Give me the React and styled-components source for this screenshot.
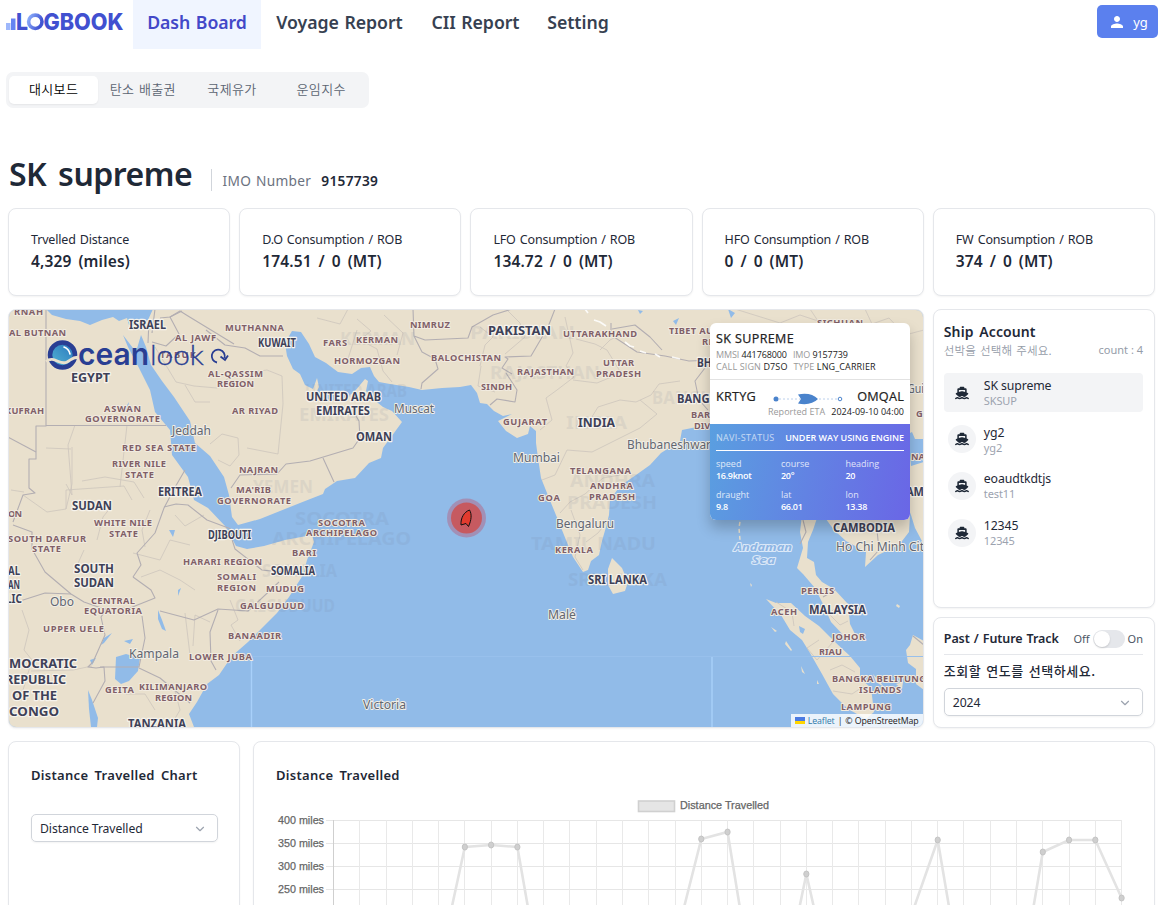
import React from "react";
import styled, { createGlobalStyle } from "styled-components";
import { FaShip } from "react-icons/fa6";
import { MdPerson } from "react-icons/md";
import { ChevronDown } from "lucide-react";

const Global = createGlobalStyle`
  * { box-sizing: border-box; }
  html, body { margin: 0; padding: 0; background: #fff; overflow: hidden; }
  body { font-family: "Noto Sans", "Noto Sans CJK KR", sans-serif; color: #1f2937; }
`;

const Page = styled.div`
  height: 905px;
  overflow: hidden;
  display: flex;
  flex-direction: column;
`;

const Nav = styled.header`
  display: flex;
  height: 49px;
  flex: none;
  padding-left: 6px;
`;
const LogoBox = styled.div`
  width: 127px;
  padding-top: 11px;
  svg { overflow: visible; }
`;
const NavItem = styled.a`
  height: 49px;
  width: ${(p) => p.$w}px;
  display: flex;
  justify-content: center;
  white-space: nowrap;
  line-height: 44px;
  font-size: 17.7px;
  font-weight: 600;
  letter-spacing: -0.05px;
  word-spacing: 1px;
  color: ${(p) => (p.$active ? "#4348c8" : "#374151")};
  background: ${(p) => (p.$active ? "#f0f5ff" : "transparent")};
`;
const UserButton = styled.button`
  margin: 5px 5px 0 auto;
  width: 61px;
  height: 33px;
  border: 0;
  border-radius: 5px;
  background: #5b80ee;
  color: #fff;
  display: flex;
  align-items: center;
  justify-content: center;
  gap: 7px;
  font: 13px "Noto Sans", sans-serif;
  padding: 0 0 0 1px;
`;

const Tabs = styled.nav`
  display: flex;
  flex: none;
  width: 363px;
  height: 36px;
  margin: 23px 0 0 6px;
  padding: 4px 3px;
  background: #f3f4f6;
  border-radius: 7px;
`;
const Tab = styled.div`
  width: 89.2px;
  height: 28px;
  line-height: 25.5px;
  text-align: center;
  font-family: "Noto Sans CJK KR", sans-serif;
  font-size: 13px;
  font-weight: 350;
  letter-spacing: 0.35px;
  word-spacing: 1.5px;
  border-radius: 5px;
  color: ${(p) => (p.$active ? "#000" : "#5b6472")};
  background: ${(p) => (p.$active ? "#fff" : "transparent")};
  box-shadow: ${(p) => (p.$active ? "0 1px 2px rgba(0,0,0,.06)" : "none")};
`;

const Heading = styled.div`
  display: flex;
  flex: none;
  height: 100px;
  padding: 43px 0 0 9px;
`;
const ShipTitle = styled.h1`
  margin: 0;
  width: 202px;
  font-size: 32px;
  line-height: 45px;
  font-weight: 600;
  letter-spacing: -0.5px;
  word-spacing: 4px;
  white-space: nowrap;
`;
const Imo = styled.div`
  display: flex;
  gap: 10px;
  height: 22px;
  margin-top: 18px;
  padding-left: 10.5px;
  border-left: 1px solid #d1d5db;
  line-height: 23px;
  font-size: 13.7px;
  letter-spacing: 0.3px;
  word-spacing: 1px;
  color: #6b7280;
  b { color: #1f2937; font-weight: 600; }
`;

const Dashboard = styled.main`
  display: grid;
  grid-template-columns: repeat(5, 1fr);
  column-gap: 9px;
  margin: 0 8px;
  flex: none;
`;
const Card = styled.section`
  background: #fff;
  border: 1px solid #e5e7eb;
  border-radius: 8px;
  box-shadow: 0 1px 2px rgba(0, 0, 0, 0.05);
`;
const StatCard = styled(Card)`
  height: 88px;
  padding: 20px 22px 0;
  white-space: nowrap;
`;
const StatName = styled.div`
  font-size: 12.5px;
  line-height: 22px;
  letter-spacing: -0.17px;
  word-spacing: 1px;
`;
const StatValue = styled.div`
  font-size: 15.5px;
  line-height: 20px;
  font-weight: 600;
  letter-spacing: 0.15px;
  word-spacing: 2.7px;
`;
const MapCard = styled(Card)`
  grid-column: span 4;
  height: 419px;
  margin-top: 13px;
  position: relative;
  overflow: hidden;
`;
const MapSvg = styled.svg`
  display: block;
  width: 914px;
  height: 417px;
`;
const Side = styled.aside`
  display: flex;
  flex-direction: column;
  gap: 9px;
  margin-top: 13px;
`;

const InfoPanel = styled.div`
  position: absolute;
  left: 701px;
  top: 13px;
  width: 200px;
  height: 197px;
  background: #fff;
  border-radius: 6px;
  overflow: hidden;
  box-shadow: 0 8px 14px rgba(0, 0, 0, 0.22);
  font-family: "Open Sans", "Noto Sans", sans-serif;
  font-size: 9px;
  white-space: nowrap;
`;
const InfoHead = styled.div`
  height: 57px;
  padding: 5px 6px 0;
  border-bottom: 1px solid #e2e2e2;
  color: #222;
  strong { display: block; font-size: 12.5px; font-weight: 500; line-height: 21px; letter-spacing: 0.4px; -webkit-text-stroke: 0.25px #222; }
`;
const InfoLine = styled.div`
  display: flex;
  gap: 6px;
  line-height: 12px;
  letter-spacing: ${(p) => p.$ls}px;
  i { font-style: normal; color: #999; }
`;
const Route = styled.div`
  height: 44px;
  padding: 7px 6px 0;
  color: #222;
`;
const Ports = styled.div`
  display: flex;
  justify-content: space-between;
  font-size: 12.7px;
  letter-spacing: 0.2px;
  -webkit-text-stroke: 0.2px #222;
  font-weight: 500;
  line-height: 18px;
  height: 20px;
  svg { margin: 5px 0 0 3px; }
`;
const Eta = styled.div`
  display: flex;
  justify-content: flex-end;
  gap: 6px;
  line-height: 10px;
  letter-spacing: 0.03px;
  span { color: #999; }
`;
const Status = styled.div`
  height: 96px;
  padding: 0 6px;
  color: #fff;
  background: linear-gradient(100deg, #5a9fe0 0%, #6a66e6 100%);
`;
const StatusHead = styled.div`
  display: flex;
  justify-content: space-between;
  height: 27px;
  line-height: 27px;
  border-bottom: 1px solid #fff;
  span { opacity: 0.65; letter-spacing: 0.3px; }
  b { font-weight: 600; letter-spacing: -0.02px; }
`;
const Metrics = styled.div`
  display: grid;
  grid-template-columns: 65px 64.5px 1fr;
  row-gap: 7px;
  padding-top: 7px;
  line-height: 12px;
  span { display: block; opacity: 0.8; }
  b { display: block; font-weight: 600; letter-spacing: -0.3px; }
`;
const Attribution = styled.div`
  position: absolute;
  right: 0;
  bottom: 0;
  width: 132px;
  height: 13px;
  padding-left: 4px;
  display: flex;
  align-items: center;
  gap: 3px;
  background: rgba(255, 255, 255, 0.82);
  font: 8.8px "Open Sans", sans-serif;
  letter-spacing: -0.12px;
  white-space: nowrap;
  color: #222;
  a { color: #2f78a8; }
`;

const AccountCard = styled(Card)`
  height: 299px;
  padding: 12px 11px 0 10px;
`;
const CardTitle = styled.h2`
  margin: 0;
  font-size: ${(p) => p.$size || 14}px;
  line-height: 20px;
  font-weight: 600;
  letter-spacing: ${(p) => p.$ls}px;
  word-spacing: ${(p) => p.$ws || 0}px;
  white-space: nowrap;
`;
const AccountHint = styled.div`
  display: flex;
  justify-content: space-between;
  height: 31px;
  color: #959ca8;
  font: 350 11.5px/16px "Noto Sans CJK KR", sans-serif;
  letter-spacing: 0.15px;
  word-spacing: 1.3px;
  span:last-child { font: 400 11px/16px "Noto Sans"; letter-spacing: 0; word-spacing: 0; }
`;
const AccountRow = styled.div`
  display: flex;
  align-items: center;
  height: 39px;
  margin-bottom: 7.7px;
  padding-left: 4px;
  gap: 8px;
  border-radius: 4px;
  background: ${(p) => (p.$active ? "#f3f4f6" : "transparent")};
`;
const Avatar = styled.span`
  width: 28px;
  height: 28px;
  border-radius: 50%;
  background: #f3f4f6;
  display: grid;
  place-items: center;
  color: #1f2937;
`;
const AccountText = styled.div`
  font-size: 12.3px;
  line-height: 17px;
  letter-spacing: -0.12px;
  small { display: block; font-size: 11px; line-height: 14px; color: #9ca3af; }
`;
const TrackCard = styled(Card)`
  height: 111px;
  padding: 9px 11px 0 10px;
`;
const TrackHead = styled.div`
  display: flex;
  align-items: center;
  height: 28px;
  padding-bottom: 4px;
  border-bottom: 1px solid #e5e7eb;
  font-size: 11px;
  color: #4b5563;
  h2 { color: #1f2937; margin-right: auto; }
`;
const Switch = styled.span`
  width: 32px;
  height: 18px;
  margin: 0 3px;
  padding: 1px;
  border-radius: 9px;
  background: #e5e7eb;
  &::before {
    content: "";
    display: block;
    width: 16px;
    height: 16px;
    border-radius: 50%;
    background: #fff;
    box-shadow: 0 1px 2px rgba(0, 0, 0, 0.15);
  }
`;
const YearLabel = styled.div`
  height: 33px;
  font: 500 13px/31px "Noto Sans CJK KR", sans-serif;
  letter-spacing: 0.55px;
  word-spacing: 1.5px;
`;
const Select = styled.div`
  display: flex;
  align-items: center;
  justify-content: space-between;
  height: 28px;
  padding: 1px 10px 0 8px;
  border: 1px solid #d1d5db;
  border-radius: 5px;
  box-shadow: 0 1px 2px rgba(0, 0, 0, 0.05);
  font-size: 12.2px;
  letter-spacing: -0.08px;
  svg { color: #9ca3af; }
`;

const Bottom = styled.div`
  display: grid;
  grid-template-columns: 232px 1fr;
  gap: 13px;
  margin: 13px 8px 0;
  flex: none;
`;
const ChartMenu = styled(Card)`
  height: 300px;
  padding: 23px 21px 0 22px;
  ${Select} { margin-top: 29px; }
`;
const ChartCard = styled(Card)`
  height: 300px;
  padding: 23px 20px 0 22px;
`;
const ChartSvg = styled.svg`
  display: block;
  width: 858px;
  height: 220px;
`;

const kinds = {
  state: { size: 9.3, weight: 700, fill: "#805f68", halo: "#f1ebe0", hw: 2 },
  country: { size: 12, weight: 700, fill: "#3e4158", halo: "#f6f3ec", hw: 2.5 },
  big: { size: 13, weight: 700, fill: "#3e4158", halo: "#f6f3ec", hw: 2.5 },
  city: { size: 12.5, weight: 400, fill: "#626671", halo: "#f1eee6", hw: 2 },
  sea: { size: 11, weight: 700, fill: "#8db5e4", halo: "#dce9f8", hw: 2 },
  ghost: { size: 18, weight: 700, fill: "#6f7b90", halo: "none", hw: 0 },
};

// [text, left, right, baseline, kind]
const labels = [
  ["UNITED ARAB", 305, 407, 397, "ghost"], ["EMIRATES", 299, 389, 421, "ghost"],
  ["KERMAN", 340, 415, 345, "ghost"], ["PAKISTAN", 470, 575, 339, "ghost"],
  ["RAJASTHAN", 490, 600, 379, "ghost"], ["INDIA", 566, 627, 429, "ghost"],
  ["YEMEN", 253, 313, 493, "ghost"], ["SOCOTRA", 295, 389, 525, "ghost"],
  ["ARCHIPELAGO", 272, 411, 545, "ghost"], ["SOMALIA", 262, 337, 577, "ghost"],
  ["GALGUDUUD", 235, 335, 612, "ghost"], ["TAMIL NADU", 531, 656, 550, "ghost"],
  ["SRI LANKA", 568, 667, 586, "ghost"], ["ANDHRA", 570, 655, 487, "ghost"],
  ["PRADESH", 567, 657, 509, "ghost"], ["BANGLADESH", 652, 765, 404, "ghost"],
  ["RNAH", 14, 43, 315, "state"], ["AL BUTNAN", 9, 66, 336, "state"],
  ["ISRAEL", 129, 166, 329, "country"], ["AL JAWF", 175, 216, 341, "state"],
  ["MUTHANNA", 225, 284, 331, "state"], ["KUWAIT", 258, 296, 347, "country"],
  ["EGYPT", 71, 110, 382, "country"], ["TABUK", 160, 196, 358, "state"],
  ["AL-QASSIM", 208, 263, 377, "state"], ["REGION", 217, 254, 387, "state"],
  ["KUFRAH", 5, 44, 414, "state"], ["ASWAN", 104, 141, 412, "state"],
  ["GOVERNORATE", 85, 160, 422, "state"], ["AR RIYAD", 232, 278, 414, "state"],
  ["Jeddah", 172, 211, 435, "city"], ["RED SEA STATE", 122, 196, 451, "state"],
  ["RIVER NILE", 112, 166, 467, "state"], ["STATE", 125, 154, 478, "state"],
  ["NAJRAN", 239, 278, 473, "state"], ["ERITREA", 158, 202, 496, "country"],
  ["MA'RIB", 236, 271, 493, "state"], ["GOVERNORATE", 217, 291, 504, "state"],
  ["SUDAN", 72, 112, 510, "country"], ["ON", 8, 22, 517, "state"],
  ["WHITE NILE", 94, 152, 526, "state"], ["STATE", 109, 138, 537, "state"],
  ["SOUTH DARFUR", 8, 86, 542, "state"], ["STATE", 32, 61, 552, "state"],
  ["DJIBOUTI", 208, 251, 539, "country"], ["HARARI REGION", 183, 262, 565, "state"],
  ["SOUTH", 74, 114, 573, "country"], ["SUDAN", 74, 114, 587, "country"],
  ["AL", 8, 20, 575, "country"], ["AN", 8, 20, 589, "country"], ["LIC", 6, 22, 603, "country"],
  ["SOMALI", 217, 256, 580, "state"], ["REGION", 217, 256, 591, "state"],
  ["SOMALIA", 271, 315, 575, "country"], ["BARI", 292, 316, 556, "state"],
  ["MUDUG", 266, 304, 592, "state"], ["GALGUDUUD", 240, 304, 609, "state"],
  ["Obo", 50, 74, 606, "city"], ["CENTRAL", 91, 135, 604, "state"],
  ["EQUATORIA", 84, 142, 614, "state"], ["UPPER UELE", 43, 104, 632, "state"],
  ["BANAADIR", 228, 281, 639, "state"], ["Kampala", 129, 179, 658, "city"],
  ["LOWER JUBA", 189, 252, 660, "state"], ["MOCRATIC", 9, 77, 668, "big"],
  ["REPUBLIC", 5, 66, 684, "big"], ["OF THE", 12, 57, 700, "big"], ["CONGO", 9, 59, 716, "big"],
  ["GEITA", 105, 134, 693, "state"], ["KILIMANJARO", 139, 207, 690, "state"],
  ["REGION", 155, 192, 701, "state"], ["TANZANIA", 128, 186, 728, "country"],
  ["NIMRUZ", 410, 450, 328, "state"], ["FARS", 323, 347, 346, "state"],
  ["KERMAN", 356, 398, 343, "state"], ["HORMOZGAN", 334, 400, 364, "state"],
  ["PAKISTAN", 488, 551, 335, "country"], ["BALOCHISTAN", 431, 501, 361, "state"],
  ["UTTARAKHAND", 563, 637, 337, "state"], ["RAJASTHAN", 517, 574, 375, "state"],
  ["SINDH", 481, 512, 390, "state"], ["UTTAR", 603, 634, 366, "state"],
  ["PRADESH", 596, 641, 377, "state"], ["UNITED ARAB", 306, 381, 401, "country"],
  ["EMIRATES", 316, 370, 415, "country"], ["Muscat", 394, 434, 413, "city"],
  ["OMAN", 356, 392, 441, "country"], ["GUJARAT", 503, 547, 425, "state"],
  ["INDIA", 578, 615, 427, "country"], ["Mumbai", 513, 560, 462, "city"],
  ["Bhubaneshwar", 627, 711, 449, "city"], ["TELANGANA", 570, 631, 474, "state"],
  ["ANDHRA", 590, 633, 489, "state"], ["PRADESH", 589, 635, 500, "state"],
  ["GOA", 538, 560, 501, "state"], ["TIBET AUTONO", 669, 742, 334, "state"],
  ["REGION", 702, 740, 345, "state"], ["SICHUAN", 817, 863, 326, "state"],
  ["BHUTAN", 697, 740, 367, "country"], ["BANGLADESH", 677, 753, 403, "country"],
  ["BARI", 691, 714, 418, "state"], ["DIVI", 694, 714, 429, "state"],
  ["SOCOTRA", 318, 365, 526, "state"], ["ARCHIPELAGO", 306, 377, 536, "state"],
  ["Bengaluru", 556, 614, 528, "city"], ["KERALA", 555, 593, 553, "state"],
  ["SRI LANKA", 588, 647, 584, "country"], ["Malé", 548, 576, 619, "city"],
  ["Victoria", 363, 406, 709, "city"], ["Andaman", 734, 792, 551, "sea"], ["Sea", 752, 775, 564, "sea"],
  ["CAMBODIA", 833, 895, 532, "country"], ["Ho Chi Minh Cit", 836, 924, 551, "city"],
  ["PERLIS", 801, 834, 594, "state"], ["MALAYSIA", 809, 866, 614, "country"],
  ["ACEH", 771, 797, 615, "state"], ["JOHOR", 832, 865, 640, "state"],
  ["RIAU", 819, 842, 655, "state"], ["BANGKA BELITUNG", 832, 926, 682, "state"],
  ["ISLANDS", 859, 901, 693, "state"], ["LAMPUNG", 841, 891, 710, "state"],
  ["Gui", 907, 924, 393, "city"], ["G", 916, 924, 417, "state"],
  ["NA", 911, 925, 460, "state"], ["AM", 906, 924, 496, "country"],
];

const land = [
  "M8 309L46 309L52 315L66 319L80 321L90 325L102 320L113 317L119 321L127 318L129 325L137 325L148 320L153 309L924 309L924 545L915 528L911 515L905 500L880 490L820 500L818 515L813 530L808 542L807 558L814 562L816 575L822 582L834 589L848 604L850 624L858 640L846 638L831 622L823 604L815 588L803 574L797 568L803 548L800 532L802 515L790 480L760 470L735 440L709 424L692 428L682 430L680 441L661 453L650 465L636 475L620 486L610 500L609 515L606 527L602 541L599 555L591 561L588 570L583 572L573 557L566 540L558 520L549 498L541 478L538 458L536 443L536 431L530 426L528 434L517 438L506 431L498 421L512 414L503 416L494 411L487 404L480 403L477 393L471 385L460 387L442 388L422 390L409 387L390 384L379 382L374 376L370 367L361 368L352 374L338 372L326 363L315 357L309 344L301 332L292 331L285 343L287 356L293 369L300 374L305 385L313 389L317 378L319 387L315 395L325 401L345 399L355 391L365 379L368 381L366 391L373 399L383 407L392 411L402 422L394 433L383 448L381 458L369 463L355 478L337 481L325 489L323 494L300 503L280 511L260 519L238 525L232 517L229 495L224 477L210 456L195 443L190 421L174 397L162 381L151 365L146 347L141 335L136 352L123 335L128 347L139 368L150 390L155 412L170 430L172 455L188 477L194 500L208 508L225 526L236 546L247 549L264 546L285 540L312 535L314 542L307 560L303 575L289 597L277 613L261 629L248 642L232 656L219 675L207 684L197 702L189 714L194 727L8 727Z",
  "M612 558L622 568L628 582L625 591L613 594L608 585L608 569Z",
  "M766 599L776 603L791 603L805 616L819 626L835 642L850 656L860 668L860 678L871 688L874 712L866 719L848 709L833 694L822 674L810 653L802 640L790 630L781 615Z",
  "M823 515L910 515L909 532L899 545L878 555L865 567L866 552L846 541L834 530Z",
  "M924 641L913 635L910 645L906 650L908 663L916 669L916 684L924 690Z",
  "M786 641L792 650L791 651L785 644Z M801 666L805 674L802 672Z M873 674L880 682L884 687L876 682Z M896 684L903 682L902 689Z",
  "M897 604L900 606L899 608L896 606Z M750 583L752 585L751 587Z M771 627L777 631L775 632Z M817 680L819 684L817 684Z",
];
const lakes = [
  "M116 657L126 654L140 658L138 671L129 681L121 684L115 679Z",
  "M158 610L162 620L166 631L162 629L158 619Z",
  "M88 690L92 700L98 718L97 727L91 727L89 709Z",
  "M112 633L104 643L101 645L104 638Z M90 660L96 658L92 665Z M169 530L175 530L173 537Z M178 590L181 588L178 596Z M124 641L133 639L130 644Z M124 410L129 402L127 413Z",
  "M908 434L912 432L915 439L924 439L924 462L911 466Z",
  "M638 310L643 311L640 314Z M673 321L679 318L676 325Z M728 309L735 313L731 318Z",
  "M799 626L805 629L803 634L800 632Z",
];
const borders = [
  "M46 309V426H36V459H29V488L35 493L23 495L13 522", "M46 425.5H166", "M8 437L36 452",
  "M149 320L148 343M152 342L166 346L179 334L170 317L182 311", "M152 333L155 309",
  "M206 330L225 345L245 348L260 356L283 356", "M13 525L32 532L32 549L45 572L71 594L84 602L104 609L130 608L155 598L151 590L133 577",
  "M133 577L141 565L137 553L155 533L164 508L174 489L185 470",
  "M160 318L170 317L180 311L188 316L234 344",
  "M164 507L176 504L188 505L207 520L231 529", "M229 530L235 549L262 570L308 575M279 582L248 611L218 609L194 620L160 611",
  "M218 610L210 632L211 661L216 670", "M108 607L101 617L105 635L93 662L88 667L96 668L104 667L105 681L93 703",
  "M100 667L139 667L145 638L142 616", "M139 668L160 678L190 703", "M8 603L20 601L45 593L71 594",
  "M231 488L240 475L277 474L286 464L310 461L353 448L360 438L359 421L356 416L332 410M323 458L334 482",
  "M413 309L414 336L425 340L468 338L472 327L493 315L512 309M414 336L422 352L435 359L438 369L422 383L421 389",
  "M512 374L502 368L508 359L505 357L531 356L548 327L555 309",
  "M490 405L497 399L515 402L517 390L506 373",
  "M611 323L611 335L637 352L665 356L689 361L714 360L740 352M612 329L635 325L650 337L662 350",
  "M708 364L695 381L699 400L708 410", "M803 520L806 532L800 544", "M877 530L879 550L870 560", "M913 636L924 645", "M823 597L835 590",
];
const thin = [
  "M75 425L68 445L72 495L66 484M72 447V484L66 509V490L124 486L132 500M46 448L71 449",
  "M23 495L47 512L66 509M82 481L105 477L134 482L144 498M120 487L127 425M155 347L176 382L194 386L217 388L232 375L267 370L282 376L283 404L278 454L247 448",
  "M185 385L195 402L210 402M210 444L222 434L238 438L239 455L230 466L218 460",
  "M133 553L160 560L170 540L190 545M141 577L160 570L180 580L195 590M22 610L29 630L24 650L32 660L20 700M31 671L73 670L92 666",
  "M185 613L190 655M210 622L195 615L193 646M230 600L238 620L231 625L240 641M175 691L180 710L170 727M126 694L145 694L155 710",
  "M317 318L340 324L348 309M357 319L371 331L360 340L377 349L383 371L392 382M384 315L403 333L397 355M357 330L347 362",
  "M480 366L485 345L493 337L480 327M481 366L478 386L495 392M508 311L520 323L525 337L505 354M565 317L573 353L566 366L574 377L557 390L546 398L552 420L540 430",
  "M573 380L597 383L621 373L607 350L595 344L576 339M600 350L610 340L622 334M576 426L590 420L598 407L620 400L636 402L651 395L659 384L680 381",
  "M542 480L555 475L567 450L592 452L612 442L640 428L657 414L640 400M560 513L570 502L585 494L603 478L620 475M571 510L580 535L575 557L583 570M586 542L598 533L610 518",
  "M735 309L780 323L800 315L818 321L810 309M865 309L872 324L889 318L905 335L924 330",
  "M776 602L792 612L794 626M819 640L807 648L817 660L833 642M830 670L842 665L855 672M833 691L852 694L864 686M838 605L829 614L840 625L848 621",
  "M84 550L75 570M97 540L103 517L111 507M11 490L24 492M150 510L142 530L145 547M175 515L185 526L204 515",
];

function BaseMap() {
  return (
    <MapSvg viewBox="9 310 914 417" fontFamily='"Noto Sans", sans-serif'>
      <rect x="8" y="309" width="917" height="420" fill="#91bbe8" />
      {land.map((d, i) => <path key={i} d={d} fill="#e9e0cd" />)}
      {lakes.map((d, i) => <path key={i} d={d} fill="#91bbe8" />)}
      <g fill="none" strokeLinejoin="round">
        {thin.map((d, i) => <path key={i} d={d} stroke="#cdc5bd" strokeWidth=".8" />)}
        {borders.map((d, i) => <path key={i} d={d} stroke="#b3aeb2" strokeWidth="1.1" />)}
        <path d="M585 309L588 313M594 320L600 322L606 326M612 331L616 335M625 342L630 346L634 347M640 351L646 353M655 354L660 357M672 357L680 359" stroke="#fff" strokeWidth="1.7" strokeOpacity=".85" />
        <path d="M741 515L739 528L740 540" stroke="#e9e0cd" strokeWidth="1.5" strokeDasharray="4 3" />
        <path d="M251.500 656V727M712 656V727" stroke="#a8d0fa" strokeWidth="1.4" />
        <path d="M230 656.500H924" stroke="#98c0ec" />
      </g>
      {labels.map(([t, l, r, y, k], i) => {
        const s = kinds[k];
        return (
          <text key={i} x={l} y={y} textLength={r - l} lengthAdjust={k === "state" ? "spacing" : "spacingAndGlyphs"}
            fontSize={s.size} fontWeight={s.weight} fill={s.fill} opacity={k === "ghost" ? 0.11 : 1}
            fontStyle={k === "sea" ? "italic" : "normal"} stroke={s.halo} strokeWidth={s.hw}
            strokeLinejoin="round" paintOrder="stroke">{t}</text>
        );
      })}
      <circle cx="466.500" cy="518" r="19.500" fill="#b06e8c" opacity=".55" />
      <circle cx="466.500" cy="518" r="15.500" fill="#c65a60" />
      <path d="M469.500 510C472 514 471.500 520 468.500 526.500L466 523.500L461 525C460.500 518 464 512 469.500 510Z" fill="#e23b2e" stroke="#111" />
      <OceanLogo />
    </MapSvg>
  );
}

function OceanLogo() {
  return (
    <g>
      <defs>
        <linearGradient id="globe" x1="0" y1="1" x2="1" y2="0">
          <stop offset="0" stopColor="#57b7d3" /><stop offset="1" stopColor="#2674bd" />
        </linearGradient>
      </defs>
      <circle cx="62.500" cy="355" r="12.500" fill="url(#globe)" stroke="#293e93" strokeWidth="4.600" />
      <path d="M46 361.500C54 355 60 366 67 362C71 360 73 356 80 357.500" fill="none" stroke="#e9e0cd" strokeWidth="2.800" />
      <path d="M64 347Q69 349 70 354" fill="none" stroke="#fff" strokeWidth="1.600" strokeLinecap="round" />
      <text x="78" y="365" fontFamily="Inter" fontSize="31" fontWeight="600" fill="#293e93" textLength="71" lengthAdjust="spacingAndGlyphs">cean</text>
      <text x="150" y="365" fontFamily="Lato" fontSize="28" fontWeight="300" fill="#293e93" stroke="#293e93" strokeWidth=".3" textLength="54" lengthAdjust="spacingAndGlyphs">look</text>
      <path d="M217 362.500A6.500 6.500 0 1 1 224.500 358M220.500 356.500L225 360L228 355.500" fill="none" stroke="#293e93" strokeWidth="1.800" />
    </g>
  );
}

function BrandLogo() {
  return (
    <svg width="118" height="22" viewBox="0 0 118 22">
      <defs>
        <linearGradient id="ring" x1="0" y1="0" x2="1" y2=".4">
          <stop offset="0" stopColor="#8db0fc" /><stop offset="1" stopColor="#4153d2" />
        </linearGradient>
      </defs>
      <path d="M0 12H4.500V19H0Z" fill="#9eb7fb" />
      <path d="M5 7.500H9.500V19H5Z" fill="#6483f2" />
      <g fontFamily="Inter" fontWeight="800" fontSize="23" fill="#4150d0">
        <text x="10" y="19" textLength="12" lengthAdjust="spacingAndGlyphs">L</text>
        <text x="37.500" y="19" textLength="80" lengthAdjust="spacingAndGlyphs">GBOOK</text>
      </g>
      <circle cx="29.300" cy="10.800" r="6.700" fill="none" stroke="url(#ring)" strokeWidth="3.600" />
    </svg>
  );
}

const x0 = 333.5;
const step = 26.27;
const series = [[4, 968], [5, 847], [6, 845], [7, 847], [8, 997], [13, 943], [14, 839], [15, 832], [16, 993], [17, 1001], [18, 874], [19, 990], [22, 915], [23, 840], [24, 995], [26, 1007], [27, 852], [28, 840], [29, 840], [30, 898]];

function DistanceChart() {
  return (
    <ChartSvg viewBox="276 785 858 220" fontFamily="Liberation Sans" fontSize="11" fill="#666">
      {[400, 350, 300, 250, 200].map((v, i) => (
        <g key={v}>
          <text x="278" y={824 + i * 22.9} textLength="46" lengthAdjust="spacingAndGlyphs" stroke="#666" strokeWidth=".25">{v} miles</text>
          <path d={`M326 ${820.5 + Math.round(i * 22.9)}H1122`} stroke="#e6e6e6" />
        </g>
      ))}
      {Array.from({ length: 31 }, (_, i) => (
        <path key={i} d={`M${x0 + Math.round(i * step)} 820V1005`} stroke={i ? "#e9e9e9" : "#cfcfcf"} />
      ))}
      <polyline points={series.map(([i, y]) => `${x0 + i * step},${y}`).join(" ")} fill="none" stroke="#e3e3e3" strokeWidth="2.600" />
      {series.filter(([, y]) => y < 905).map(([i, y]) => (
        <ellipse key={i} cx={x0 + i * step} cy={y} rx="2.600" ry="3" fill="#cfcfcf" stroke="#c4c4c4" />
      ))}
      <rect x="638.500" y="801" width="36" height="10.500" fill="#e5e5e5" stroke="#d0d0d0" strokeWidth="1.600" />
      <text x="680" y="809" textLength="89" lengthAdjust="spacingAndGlyphs" stroke="#666" strokeWidth=".25">Distance Travelled</text>
    </ChartSvg>
  );
}

const stats = [
  ["Trvelled Distance", "4,329 (miles)"],
  ["D.O Consumption / ROB", "174.51 / 0 (MT)"],
  ["LFO Consumption / ROB", "134.72 / 0 (MT)"],
  ["HFO Consumption / ROB", "0 / 0 (MT)"],
  ["FW Consumption / ROB", "374 / 0 (MT)"],
];
const accounts = [["SK supreme", "SKSUP"], ["yg2", "yg2"], ["eoaudtkdtjs", "test11"], ["12345", "12345"]];
const metrics = [["speed", "16.9knot"], ["course", "20°"], ["heading", "20"], ["draught", "9.8"], ["lat", "66.01"], ["lon", "13.38"]];

export default function App() {
  return (
    <Page>
      <Global />
      <Nav>
        <LogoBox><BrandLogo /></LogoBox>
        <NavItem $w={128} $active>Dash Board</NavItem>
        <NavItem $w={157}>Voyage Report</NavItem>
        <NavItem $w={115}>CII Report</NavItem>
        <NavItem $w={90}>Setting</NavItem>
        <UserButton><MdPerson size={18} />yg</UserButton>
      </Nav>
      <Tabs>
        <Tab $active>대시보드</Tab>
        <Tab>탄소 배출권</Tab>
        <Tab>국제유가</Tab>
        <Tab>운임지수</Tab>
      </Tabs>
      <Heading>
        <ShipTitle>SK supreme</ShipTitle>
        <Imo><span>IMO Number</span><b>9157739</b></Imo>
      </Heading>
      <Dashboard>
        {stats.map(([name, value]) => (
          <StatCard key={name}>
            <StatName>{name}</StatName>
            <StatValue>{value}</StatValue>
          </StatCard>
        ))}
        <MapCard>
          <BaseMap />
          <InfoPanel>
            <InfoHead>
              <strong>SK SUPREME</strong>
              <InfoLine $ls={-0.1}><span><i>MMSI</i> 441768000</span><span><i>IMO</i> 9157739</span></InfoLine>
              <InfoLine $ls={0.12}><span><i>CALL SIGN</i> D7SO</span><span><i>TYPE</i> LNG_CARRIER</span></InfoLine>
            </InfoHead>
            <Route>
              <Ports>
                <span>KRTYG</span>
                <svg width="70" height="14" viewBox="0 0 70 14">
                  <path d="M6 7H65" stroke="#bcd0ec" strokeDasharray="2 2" />
                  <circle cx="3" cy="7" r="2.500" fill="#4a83cc" />
                  <circle cx="67" cy="7" r="1.800" fill="#fff" stroke="#4a83cc" />
                  <path d="M25 2.500Q38 0 45 7Q38 14 25 11.500L28 7Z" fill="#4a83cc" />
                </svg>
                <span>OMQAL</span>
              </Ports>
              <Eta><span>Reported ETA</span>2024-09-10 04:00</Eta>
            </Route>
            <Status>
              <StatusHead><span>NAVI-STATUS</span><b>UNDER WAY USING ENGINE</b></StatusHead>
              <Metrics>
                {metrics.map(([k, v]) => <div key={k}><span>{k}</span><b>{v}</b></div>)}
              </Metrics>
            </Status>
          </InfoPanel>
          <Attribution>
            <svg width="10" height="7" viewBox="0 0 10 7"><path d="M0 0H10V4H0Z" fill="#4c7be1" /><path d="M0 4H10V7H0Z" fill="#ffd500" /></svg>
            <a>Leaflet</a><span>|</span><span>© OpenStreetMap</span>
          </Attribution>
        </MapCard>
        <Side>
          <AccountCard>
            <CardTitle $ls={0.1} $ws={2}>Ship Account</CardTitle>
            <AccountHint><span>선박을 선택해 주세요.</span><span>count : 4</span></AccountHint>
            {accounts.map(([name, id], i) => (
              <AccountRow key={name} $active={i === 0}>
                <Avatar><FaShip size={14} /></Avatar>
                <AccountText>{name}<small>{id}</small></AccountText>
              </AccountRow>
            ))}
          </AccountCard>
          <TrackCard>
            <TrackHead>
              <CardTitle $size={12.5} $ls={-0.1} $ws={1}>Past / Future Track</CardTitle>
              <span>Off</span><Switch /><span>On</span>
            </TrackHead>
            <YearLabel>조회할 연도를 선택하세요.</YearLabel>
            <Select>2024<ChevronDown size={14} /></Select>
          </TrackCard>
        </Side>
      </Dashboard>
      <Bottom>
        <ChartMenu>
          <CardTitle $size={13} $ls={0.3} $ws={2.5}>Distance Travelled Chart</CardTitle>
          <Select>Distance Travelled<ChevronDown size={14} /></Select>
        </ChartMenu>
        <ChartCard>
          <CardTitle $size={13} $ls={0.3} $ws={2.5}>Distance Travelled</CardTitle>
          <DistanceChart />
        </ChartCard>
      </Bottom>
    </Page>
  );
}
